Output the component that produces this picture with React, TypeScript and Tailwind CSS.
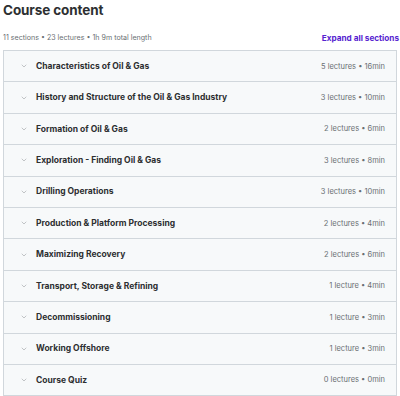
import { ChevronDown } from 'lucide-react';

const sections = [
  { title: 'Characteristics of Oil & Gas', meta: '5 lectures • 16min' },
  { title: 'History and Structure of the Oil & Gas Industry', meta: '3 lectures • 10min' },
  { title: 'Formation of Oil & Gas', meta: '2 lectures • 6min' },
  { title: 'Exploration - Finding Oil & Gas', meta: '3 lectures • 8min' },
  { title: 'Drilling Operations', meta: '3 lectures • 10min' },
  { title: 'Production & Platform Processing', meta: '2 lectures • 4min' },
  { title: 'Maximizing Recovery', meta: '2 lectures • 6min' },
  { title: 'Transport, Storage & Refining', meta: '1 lecture • 4min' },
  { title: 'Decommissioning', meta: '1 lecture • 3min' },
  { title: 'Working Offshore', meta: '1 lecture • 3min' },
  { title: 'Course Quiz', meta: '0 lectures • 0min' },
];

const App = () => {
  return (
    <div className="w-[400px] h-[396px] overflow-hidden bg-white pl-[3px] font-['Inter',sans-serif] text-[#2d2f31]">
      <h2 className="text-[13.5px] font-bold leading-[20px] tracking-[-0.1px]">Course content</h2>

      <div className="mt-[10px] flex items-center justify-between h-[16px]">
        <span className="text-[7.1px] text-[#6a6f73]">11 sections • 23 lectures • 1h 9m total length</span>
        <span className="text-[8.2px] font-bold text-[#5624d0] whitespace-nowrap mr-[1px]">Expand all sections</span>
      </div>

      {/* Section list */}
      <div className="mt-[4px] mr-[3px] border border-[#d1d7dc] border-b-0">
        {sections.map((s) => (
          <div
            key={s.title}
            className="h-[31.4px] flex items-center bg-[#f7f9fa] border-b border-[#d1d7dc] pl-[16px] pr-[11px]"
          >
            <ChevronDown size={8} strokeWidth={1.5} className="text-[#8a8f93] shrink-0" />
            <span className="ml-[8px] text-[8.5px] font-bold">{s.title}</span>
            <span className="ml-auto text-[7.5px] text-[#6a6f73]">{s.meta}</span>
          </div>
        ))}
      </div>
    </div>
  );
};

export default App;
